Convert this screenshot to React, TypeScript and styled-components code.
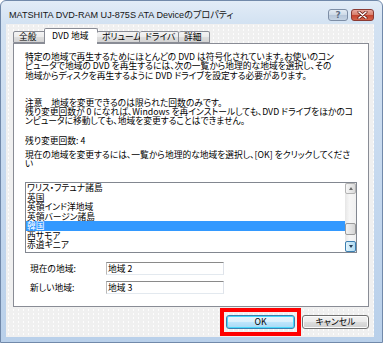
import React from 'react';
import styled, { createGlobalStyle } from 'styled-components';

const jp = `"Noto Sans CJK JP", "Noto Sans CJK SC", sans-serif`;

const GlobalStyle = createGlobalStyle`
  html, body {
    margin: 0;
    padding: 0;
    background: #ffffff;
    overflow: hidden;
  }
  body {
    font-family: ${jp};
    color: #000;
  }
`;

const Window = styled.div`
  width: 383px;
  height: 343px;
  box-sizing: border-box;
  display: flex;
  flex-direction: column;
  background: linear-gradient(to bottom, #e2ecf7 0px, #d3e2f2 22px, #c3d7ee 60%, #b9d0ea 100%);
  border: 1px solid #7189aa;
  border-radius: 6px 6px 0 0;
  padding: 0 8px 5px 5px;
`;

const TitleBar = styled.div`
  height: 23px;
  display: flex;
  align-items: flex-start;
  flex-shrink: 0;
`;

const Title = styled.div`
  padding: 8px 0 0 3px;
  font-family: "Liberation Sans", ${jp};
  font-size: 9.1px;
  line-height: 12px;
  color: #141414;
  white-space: nowrap;
  font-feature-settings: "palt";
`;

const CaptionButtons = styled.div`
  margin: 8px 0 0 auto;
  display: flex;
  gap: 3px;
`;

const CaptionButton = styled.div<{ $close?: boolean }>`
  width: ${(p) => (p.$close ? 23 : 20)}px;
  height: 12px;
  box-sizing: border-box;
  border-radius: 3px;
  border: 1px solid ${(p) => (p.$close ? '#8a3a33' : '#7d8ea6')};
  background: ${(p) =>
    p.$close
      ? 'linear-gradient(to bottom, #e9a99f 0%, #d8826f 45%, #c5452f 55%, #d3634a 100%)'
      : 'linear-gradient(to bottom, #e3ebf4 0%, #cfdbe8 45%, #b7c7da 55%, #c6d4e4 100%)'};
  display: flex;
  align-items: center;
  justify-content: center;
  font-family: "DejaVu Sans", sans-serif;
  font-size: 9px;
  font-weight: bold;
  line-height: 10px;
  color: #5f6f84;
`;

const Client = styled.div`
  flex: 1;
  display: flex;
  flex-direction: column;
  background-color: #f0f0f0;
  background-image: radial-gradient(circle, rgba(255, 255, 255, 0.85) 0.55px, transparent 0.9px);
  background-size: 5px 4px;
  padding: 4px 5px 0 7px;
  min-height: 0;
`;

const TabRow = styled.div`
  height: 15px;
  display: flex;
  align-items: flex-end;
  position: relative;
  z-index: 1;
  flex-shrink: 0;
`;

const Tab = styled.div<{ $w: number; $active?: boolean }>`
  width: ${(p) => p.$w}px;
  box-sizing: border-box;
  height: ${(p) => (p.$active ? 16 : 12)}px;
  margin: ${(p) => (p.$active ? '0 -1px -1px -2px' : '0')};
  padding-left: ${(p) => (p.$active ? 7 : 5)}px;
  border: 1px solid #898c95;
  border-bottom: ${(p) => (p.$active ? 'none' : '1px solid #898c95')};
  border-left: ${(p) => (p.$active ? '1px solid #898c95' : 'none')};
  border-radius: 2px 2px 0 0;
  background: ${(p) =>
    p.$active
      ? '#ffffff'
      : 'linear-gradient(to bottom, #f4f4f4 0%, #ececec 48%, #dedede 52%, #d3d3d3 100%)'};
  font-size: 8.75px;
  line-height: ${(p) => (p.$active ? 14 : 10)}px;
  font-feature-settings: "palt";
  white-space: nowrap;
  &:first-child {
    border-left: 1px solid #898c95;
  }
`;

const Panel = styled.div`
  flex: 1;
  box-sizing: border-box;
  background: #ffffff;
  border: 1px solid #898c95;
  padding: 8px 11px 0 11px;
  display: flex;
  flex-direction: column;
  min-height: 0;
`;

const Para = styled.div<{ $mt?: number }>`
  margin-top: ${(p) => p.$mt ?? 0}px;
  font-size: 8.75px;
  line-height: 9.3px;
  white-space: pre;
  font-feature-settings: "palt";
`;

const ListBox = styled.div`
  margin-top: 13px;
  height: 71px;
  box-sizing: border-box;
  border: 1px solid #828790;
  display: flex;
  flex-shrink: 0;
`;

const Items = styled.div`
  flex: 1;
  padding-top: 0.5px;
  overflow: hidden;
`;

const Item = styled.div<{ $selected?: boolean }>`
  height: 9.5px;
  line-height: 9.5px;
  padding-left: 1px;
  font-size: 8.75px;
  font-feature-settings: "palt";
  white-space: nowrap;
  background: ${(p) => (p.$selected ? '#3399ff' : 'transparent')};
  color: ${(p) => (p.$selected ? '#ffffff' : '#000000')};
`;

const ScrollBar = styled.div`
  width: 11px;
  display: flex;
  flex-direction: column;
  background: linear-gradient(to right, #e6e6e6, #f6f6f6 40%, #f0f0f0);
`;

const ScrollButton = styled.div<{ $hot?: boolean }>`
  height: 11px;
  box-sizing: border-box;
  border: 1px solid ${(p) => (p.$hot ? '#3c7fb1' : '#b3b3b3')};
  border-radius: 2px;
  background: ${(p) =>
    p.$hot
      ? 'linear-gradient(to right, #e3f4fc, #c4e5f6 50%, #b2dbf2)'
      : 'linear-gradient(to right, #f6f6f6, #e8e8e8 50%, #d9d9d9)'};
  display: flex;
  align-items: center;
  justify-content: center;
`;

const Track = styled.div`
  flex: 1;
  display: flex;
  flex-direction: column;
  justify-content: flex-end;
`;

const Thumb = styled.div`
  height: 12px;
  margin-bottom: 6px;
  box-sizing: border-box;
  border: 1px solid #9b9b9b;
  border-radius: 2px;
  background: linear-gradient(to right, #f3f3f3, #e4e4e4 50%, #d5d5d5);
`;

const Arrow = styled.div<{ $down?: boolean }>`
  width: 0;
  height: 0;
  border-left: 2.5px solid transparent;
  border-right: 2.5px solid transparent;
  ${(p) => (p.$down ? 'border-top: 3px solid #2a3f55;' : 'border-bottom: 3px solid #6b6b6b;')}
`;

const FieldRow = styled.div<{ $mt: number }>`
  margin-top: ${(p) => p.$mt}px;
  display: flex;
  align-items: center;
  height: 13px;
  flex-shrink: 0;
`;

const FieldLabel = styled.div`
  width: 81px;
  box-sizing: border-box;
  padding-left: 5px;
  font-size: 8.75px;
  line-height: 11px;
  font-feature-settings: "palt";
  white-space: nowrap;
`;

const TextBox = styled.div`
  width: 118px;
  height: 13px;
  box-sizing: border-box;
  border-top: 1px solid #8a8a8a;
  border-left: 1px solid #b9b9b9;
  border-right: 1px solid #dfe3ea;
  border-bottom: 1px solid #e3e9ef;
  background: #ffffff;
  padding-left: 1px;
  font-size: 8.75px;
  line-height: 11px;
  font-feature-settings: "palt";
  white-space: nowrap;
`;

const ButtonRow = styled.div`
  height: 30px;
  flex-shrink: 0;
  display: flex;
  align-items: center;
  justify-content: flex-end;
  gap: 1px;
`;

const Highlight = styled.div`
  border: 4px solid #ff0000;
  padding: 3px 2px;
  display: flex;
`;

const Button = styled.div<{ $default?: boolean }>`
  width: ${(p) => (p.$default ? 69 : 67)}px;
  height: 14px;
  box-sizing: border-box;
  border: 1px solid ${(p) => (p.$default ? '#3c7fb1' : '#707070')};
  border-radius: 3px;
  background: ${(p) =>
    p.$default
      ? 'linear-gradient(to bottom, #eaf6fd 0%, #d9f0fc 48%, #bee6fd 52%, #a7d9f5 100%)'
      : 'linear-gradient(to bottom, #f2f2f2 0%, #ebebeb 48%, #dddddd 52%, #cfcfcf 100%)'};
  box-shadow: ${(p) => (p.$default ? 'inset 0 0 0 1px #48d8fb' : 'inset 0 0 0 1px #fcfcfc')};
  display: flex;
  align-items: center;
  justify-content: center;
  font-size: 8.75px;
  line-height: 12px;
  font-feature-settings: "palt";
`;

const tabs = [
  { label: '全般', w: 33 },
  { label: 'DVD 地域', w: 54, active: true },
  { label: 'ボリューム', w: 43 },
  { label: 'ドライバ', w: 39 },
  { label: '詳細', w: 31 },
];

const regions = [
  'ワリス・フテュナ諸島',
  '英国',
  '英領インド洋地域',
  '英領バージン諸島',
  '韓国',
  '西サモア',
  '赤道ギニア',
];

const CloseGlyph = () => (
  <svg width="11" height="8" viewBox="0 0 11 8">
    <path d="M2 1 L9 7 M9 1 L2 7" stroke="#6a1c14" strokeWidth="3" strokeLinecap="round" />
    <path d="M2 1 L9 7 M9 1 L2 7" stroke="#ffffff" strokeWidth="1.6" strokeLinecap="round" />
  </svg>
);

export default function App() {
  return (
    <>
      <GlobalStyle />
      <Window>
        <TitleBar>
          <Title>MATSHITA DVD-RAM UJ-875S ATA Deviceのプロパティ</Title>
          <CaptionButtons>
            <CaptionButton>?</CaptionButton>
            <CaptionButton $close>
              <CloseGlyph />
            </CaptionButton>
          </CaptionButtons>
        </TitleBar>
        <Client>
          <TabRow>
            {tabs.map((t) => (
              <Tab key={t.label} $w={t.w} $active={t.active}>
                {t.label}
              </Tab>
            ))}
          </TabRow>
          <Panel>
            <Para>
              {'特定の地域で再生するためにほとんどの DVD は符号化されています。お使いのコン\n' +
                'ピュータで地域の DVD を再生するには、次の一覧から地理的な地域を選択し、その\n' +
                '地域からディスクを再生するように DVD ドライブを設定する必要があります。'}
            </Para>
            <Para $mt={18}>
              {'注意　地域を変更できるのは限られた回数のみです。\n' +
                '残り変更回数が 0 になれば、Windows を再インストールしても、DVD ドライブをほかのコ\n' +
                'ンピュータに移動しても、地域を変更することはできません。'}
            </Para>
            <Para $mt={10}>残り変更回数: 4</Para>
            <Para $mt={5}>
              {'現在の地域を変更するには、一覧から地理的な地域を選択し、[OK] をクリックしてくださ\n' + 'い'}
            </Para>
            <ListBox>
              <Items>
                {regions.map((r, i) => (
                  <Item key={r} $selected={i === 4}>
                    {r}
                  </Item>
                ))}
              </Items>
              <ScrollBar>
                <ScrollButton>
                  <Arrow />
                </ScrollButton>
                <Track>
                  <Thumb />
                </Track>
                <ScrollButton $hot>
                  <Arrow $down />
                </ScrollButton>
              </ScrollBar>
            </ListBox>
            <FieldRow $mt={9}>
              <FieldLabel>現在の地域:</FieldLabel>
              <TextBox>地域 2</TextBox>
            </FieldRow>
            <FieldRow $mt={6}>
              <FieldLabel>新しい地域:</FieldLabel>
              <TextBox>地域 3</TextBox>
            </FieldRow>
          </Panel>
          <ButtonRow>
            <Highlight>
              <Button $default>OK</Button>
            </Highlight>
            <Button>キャンセル</Button>
          </ButtonRow>
        </Client>
      </Window>
    </>
  );
}
